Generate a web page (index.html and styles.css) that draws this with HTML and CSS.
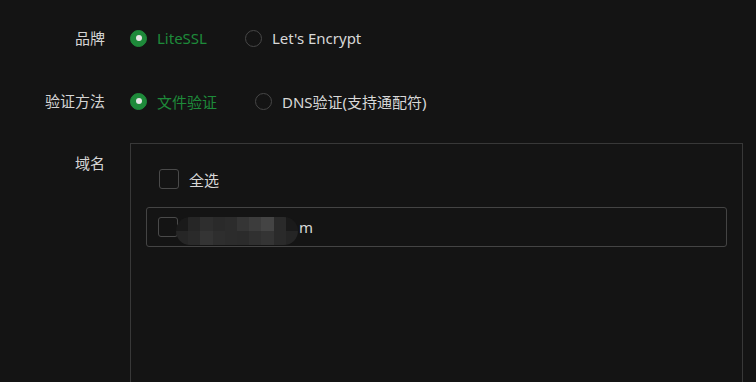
FILE: index.html
```html
<!DOCTYPE html>
<html lang="zh-CN">
<head>
<meta charset="utf-8">
<title>SSL</title>
<link rel="stylesheet" href="styles.css">
</head>
<body>
<div class="form">
  <div class="row row-brand">
    <div class="label">品牌</div>
    <div class="controls">
      <label class="radio checked"><span class="dot"></span><span class="txt">LiteSSL</span></label>
      <label class="radio"><span class="dot"></span><span class="txt">Let's Encrypt</span></label>
    </div>
  </div>
  <div class="row row-method">
    <div class="label">验证方法</div>
    <div class="controls">
      <label class="radio checked"><span class="dot"></span><span class="txt">文件验证</span></label>
      <label class="radio"><span class="dot"></span><span class="txt">DNS验证(支持通配符)</span></label>
    </div>
  </div>
  <div class="row row-domain">
    <div class="label label-top">域名</div>
    <div class="domain-box">
      <div class="check-all">
        <span class="checkbox"></span><span class="txt">全选</span>
      </div>
      <div class="domain-item">
        <span class="checkbox"></span>
        <span class="mosaic">
          <i class="m1"></i><i class="m2"></i><i class="m3"></i><i class="m4"></i><i class="m5"></i><i class="m6"></i><i class="m7"></i><i class="m8"></i><i class="m9"></i><i class="m10"></i>
          <i class="n1"></i><i class="n2"></i><i class="n3"></i><i class="n4"></i><i class="n5"></i><i class="n6"></i><i class="n7"></i><i class="n8"></i><i class="n9"></i><i class="n10"></i>
        </span>
        <span class="txt domain-tail">m</span>
      </div>
    </div>
  </div>
</div>
</body>
</html>
```
FILE: styles.css
```css
html, body {
  margin: 0;
  padding: 0;
  background: #141414;
  height: 100%;
  overflow: hidden;
}
body {
  font-family: "Noto Sans", "Noto Sans CJK SC", sans-serif;
  font-size: 15px;
  color: #d8d8d8;
}
.form {
  padding-top: 22px;
}
.row {
  display: flex;
  align-items: flex-start;
}
.row-brand { margin-bottom: 31px; }
.row-method { margin-bottom: 26px; }
.label {
  width: 105px;
  text-align: right;
  line-height: 32px;
  height: 32px;
  margin-right: 25px;
  color: #d4d4d4;
  flex: none;
}
.label-top {
  padding-top: 4px;
}
.controls {
  display: flex;
  align-items: center;
  height: 32px;
}
.radio {
  display: flex;
  align-items: center;
  margin-right: 38px;
  cursor: pointer;
}
.radio .dot {
  width: 15px;
  height: 15px;
  border: 1px solid #474747;
  border-radius: 50%;
  box-sizing: content-box;
  margin-right: 10px;
  position: relative;
}
.radio.checked .dot {
  background: #1e8a3a;
  border-color: #1e8a3a;
}
.radio.checked .dot::after {
  content: "";
  position: absolute;
  left: 4.5px;
  top: 4.5px;
  width: 6px;
  height: 6px;
  border-radius: 50%;
  background: #e6e6e6;
}
.radio.checked .txt {
  color: #1e8a3a;
}
.domain-box {
  width: 581px;
  height: 300px;
  border: 1px solid #383838;
  padding: 15px 15px 0 15px;
  box-sizing: content-box;
  flex: none;
}
.check-all {
  display: flex;
  align-items: center;
  height: 40px;
  padding-left: 13px;
  margin-bottom: 8px;
}
.checkbox {
  width: 18px;
  height: 18px;
  border: 1px solid #4a4a4a;
  border-radius: 3px;
  margin-right: 10px;
  flex: none;
}
.domain-item {
  display: flex;
  align-items: center;
  height: 38px;
  border: 1px solid #444;
  border-radius: 3px;
  padding-left: 11px;
}
.domain-item .checkbox {
  margin-right: 0;
}
.mosaic {
  display: grid;
  grid-template-columns: repeat(10, 12.2px);
  grid-template-rows: 14px 14px;
  width: 122px;
  height: 28px;
  margin-left: -2px;
  margin-top: 8px;
  border-radius: 14px;
  overflow: hidden;
}
.mosaic i { display: block; }
.m1 { background: #1a1a1a; }
.m2 { background: #262626; }
.m3 { background: #2e2e2e; }
.m4 { background: #2a2a2a; }
.m5 { background: #2c2c2c; }
.m6 { background: #353535; }
.m7 { background: #3c3c3c; }
.m8 { background: #444; }
.m9 { background: #2a2a2a; }
.m10 { background: #1a1a1a; }
.n1 { background: #262626; }
.n2 { background: #2a2a2a; }
.n3 { background: #343434; }
.n4 { background: #2e2e2e; }
.n5 { background: #2c2c2c; }
.n6 { background: #2b2b2b; }
.n7 { background: #303030; }
.n8 { background: #343434; }
.n9 { background: #2a2a2a; }
.n10 { background: #252525; }
.domain-tail {
  margin-left: 1px;
}
```
